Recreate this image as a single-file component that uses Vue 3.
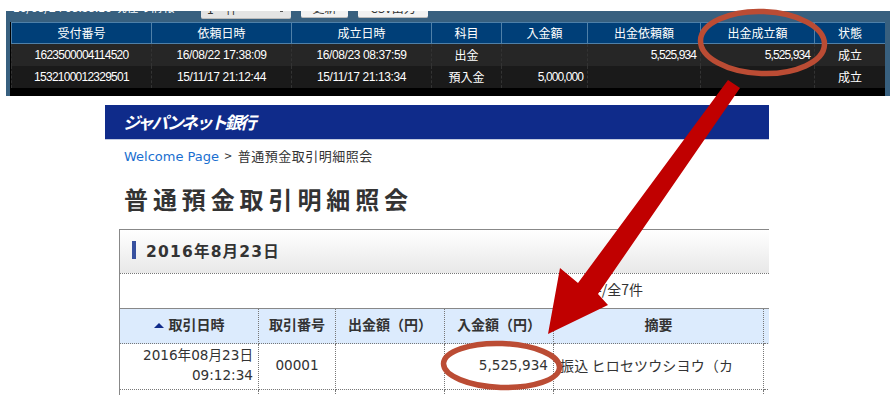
<script setup>
const topHead = ['受付番号', '依頼日時', '成立日時', '科目', '入金額', '出金依頼額', '出金成立額', '状態']
const topRows = [
  ['1623500004114520', '16/08/22 17:38:09', '16/08/23 08:37:59', '出金', '', '5,525,934', '5,525,934', '成立'],
  ['1532100012329501', '15/11/17 21:12:44', '15/11/17 21:13:34', '預入金', '5,000,000', '', '', '成立']
]
const numeric = [4, 5, 6]
const bankHead = ['取引日時', '取引番号', '出金額（円）', '入金額（円）', '摘要', '']
</script>

<template>
  <div class="page">
    <section class="panel">
      <div class="toolbar">
        <span class="stamp">16/08/24 08:38:16 現在の情報</span>
        <span class="select"><span>1</span><span>件</span><i class="caret"></i></span>
        <span class="btn update">更新</span>
        <span class="btn csv">CSV出力</span>
      </div>
      <div class="tradeTable">
        <div class="tradeRow headRow">
          <div v-for="h in topHead" :key="h" class="hcell">{{ h }}</div>
        </div>
        <div v-for="(row, r) in topRows" :key="r" class="tradeRow" :class="r ? 'rowB' : 'rowA'">
          <div
            v-for="(c, i) in row"
            :key="i"
            class="dcell"
            :class="{ num: numeric.includes(i), jp: i === 3 || i === 7, id: i === 0 }"
          >{{ c }}</div>
        </div>
      </div>
    </section>

    <section class="bank">
      <header class="banner"><span class="logo">ジャパンネット銀行</span></header>
      <nav class="crumb"><a class="link">Welcome Page</a> <span class="sep">&gt;</span> 普通預金取引明細照会</nav>
      <h1 class="title">普通預金取引明細照会</h1>
      <div class="card">
        <div class="dateHead"><span class="mark"></span><h2>2016年8月23日</h2></div>
        <div class="count">1～7件/全7件</div>
        <div class="grid thead">
          <div v-for="(h, i) in bankHead" :key="i" class="th">
            <span v-if="i === 0" class="sort"></span>{{ h }}
          </div>
        </div>
        <div class="grid tbody">
          <div class="td right">2016年08月23日<br>09:12:34</div>
          <div class="td center">00001</div>
          <div class="td"></div>
          <div class="td right">5,525,934</div>
          <div class="td memo">振込 ヒロセツウシヨウ（カ</div>
          <div class="td last"></div>
        </div>
        <div class="grid tail">
          <div class="td right">2016年</div>
          <div class="td"></div>
          <div class="td"></div>
          <div class="td"></div>
          <div class="td"></div>
          <div class="td last"></div>
        </div>
      </div>
    </section>

    <svg class="marks" width="896" height="403" viewBox="0 0 896 403">
      <ellipse cx="762.5" cy="42.5" rx="62" ry="31" transform="rotate(2 762.5 42.5)" fill="none" stroke="#bb4c34" stroke-width="5.5" />
      <ellipse cx="501.5" cy="365.5" rx="58" ry="22" transform="rotate(2 501.5 365.5)" fill="none" stroke="#bb4c34" stroke-width="5.5" />
      <polygon points="728,80 740,88 598,294 608,305 548,334 560,268 578,283" fill="#c00000" />
    </svg>
  </div>
</template>

<style>
html, body { margin: 0; background: #fff; }
</style>

<style scoped>
.page {
  position: relative;
  width: 896px;
  height: 403px;
  overflow: hidden;
  padding-top: 11px;
  box-sizing: border-box;
  background: #fff;
  font-family: "Noto Sans CJK JP", sans-serif;
}

/* top panel */
.panel {
  width: 884px;
  height: 85px;
  margin-left: 6px;
  padding-left: 4px;
  box-sizing: border-box;
  background: #38607f;
  overflow: hidden;
}
.toolbar {
  height: 11px;
  display: flex;
  align-items: flex-end;
  overflow: hidden;
  color: #fff;
  font-size: 12px;
}
.stamp {
  width: 188px;
  flex: none;
  margin-left: 3px;
  margin-bottom: 8px;
  line-height: 14px;
  white-space: nowrap;
}
.select, .btn {
  flex: none;
  height: 24px;
  box-sizing: border-box;
  display: flex;
  align-items: flex-end;
  justify-content: center;
  padding-bottom: 2px;
  line-height: 14px;
  color: #333;
  border-radius: 2px;
  border-bottom: 1px solid #bbb;
}
.select {
  width: 90px;
  margin-bottom: 3px;
  background: #e4e4e4;
  justify-content: flex-start;
  gap: 12px;
  padding-left: 6px;
  position: relative;
}
.caret {
  position: absolute;
  right: 8px;
  bottom: 6px;
  width: 3px;
  height: 2px;
  background: #555;
}
.btn { margin-bottom: 4px; background: #f2f2f2; }
.update { width: 47px; margin-left: 10px; }
.csv { width: 70px; margin-left: 10px; }

.tradeTable {
  width: 875px;
  height: 74px;
  background: #000;
  padding-left: 1px;
  box-sizing: border-box;
  color: #fff;
}
.tradeRow {
  display: grid;
  grid-template-columns: 140px 140px 140px 70px 86px 113px 114px 71px;
  width: 874px;
}
.headRow { height: 22px; }
.rowA { height: 22px; background: #262626; }
.rowB { height: 22px; background: #1a1a1a; }
.hcell {
  background: #003f78;
  border-left: 1px solid #4f80a8;
  border-top: 1px solid #4f80a8;
  border-bottom: 1px solid #4f80a8;
  box-sizing: border-box;
  font-size: 12px;
  line-height: 20px;
  text-align: center;
}
.dcell {
  border-left: 1px dashed #333;
  box-sizing: border-box;
  font-family: "Liberation Sans", sans-serif;
  font-size: 12px;
  line-height: 22px;
  letter-spacing: -0.4px;
  text-align: center;
  white-space: nowrap;
}
.dcell.id { letter-spacing: -0.75px; }
.dcell.jp { font-family: "Noto Sans CJK JP", sans-serif; font-size: 12px; letter-spacing: 0; }
.dcell.num { text-align: right; padding-right: 4px; letter-spacing: -0.9px; }

/* bank page */
.bank {
  width: 664px;
  margin: 9px 0 0 105px;
  color: #333;
}
.banner {
  height: 35px;
  box-sizing: border-box;
  background: #0f2b8a;
  border-bottom: 1px solid #c3cbe0;
  padding-left: 18px;
  line-height: 33px;
}
.logo {
  color: #fff;
  font-size: 17px;
  font-weight: 700;
  font-style: italic;
  letter-spacing: -2.4px;
  white-space: nowrap;
}
.crumb {
  height: 34px;
  margin-left: 19px;
  line-height: 32px;
  font-size: 13px;
  letter-spacing: 0.5px;
}
.link { color: #1a6fd0; font-family: "DejaVu Sans", "Noto Sans CJK JP", sans-serif; font-size: 13px; letter-spacing: 0; }
.sep { margin: 0 2px; }
.title {
  margin: 0 0 3px 19px;
  height: 52px;
  line-height: 50px;
  font-size: 24px;
  font-weight: 700;
  letter-spacing: 4.9px;
  white-space: nowrap;
}
.card {
  margin-left: 14px;
  width: 650px;
  height: 166px;
  box-sizing: border-box;
  border-left: 1px solid #888;
  border-top: 1px solid #888;
  overflow: hidden;
}
.dateHead {
  height: 44px;
  box-sizing: border-box;
  border-bottom: 1px dotted #777;
  background: linear-gradient(#fff, #e8e8e8);
  display: flex;
  align-items: center;
  padding: 0 0 3px 12px;
  gap: 10px;
}
.mark { width: 4px; height: 18px; background: #37509f; flex: none; }
.dateHead h2 {
  margin: 0;
  font-family: "DejaVu Sans", "Noto Sans CJK JP", sans-serif;
  font-size: 15.5px;
  font-weight: 700;
  letter-spacing: 1.2px;
}
.count {
  height: 35px;
  box-sizing: border-box;
  border-bottom: 1px solid #888;
  line-height: 30px;
  font-size: 14px;
  text-align: right;
  padding-right: 126px;
}
.grid {
  display: grid;
  grid-template-columns: 139px 77px 109px 109px 210px 6px;
}
.thead { height: 35px; background: #dcebfd; }
.th {
  box-sizing: border-box;
  border-right: 1px dotted #777;
  border-bottom: 1px dotted #777;
  line-height: 31px;
  font-size: 14px;
  font-weight: 700;
  text-align: center;
  white-space: nowrap;
}
.th:last-child { border-right: 0; }
.sort {
  display: inline-block;
  width: 0;
  height: 0;
  margin-right: 5px;
  vertical-align: 2px;
  border-left: 5px solid transparent;
  border-right: 5px solid transparent;
  border-bottom: 5px solid #0f2b8a;
}
.tbody { height: 46px; }
.tail { height: 10px; }
.td {
  box-sizing: border-box;
  border-right: 1px dotted #777;
  border-bottom: 1px dotted #777;
  font-family: "DejaVu Sans", "Noto Sans CJK JP", sans-serif;
  font-size: 13.6px;
  line-height: 20px;
  white-space: nowrap;
  overflow: hidden;
}
.td.last { border-right: 0; }
.right { text-align: right; padding: 1px 5px 0 0; }
.center { text-align: center; line-height: 42px; }
.tbody .td:nth-child(4) { line-height: 40px; }
.tail .right { padding-top: 5px; }
.memo {
  padding-left: 6px;
  line-height: 42px;
  font-family: "Noto Sans CJK JP", sans-serif;
  font-size: 14px;
  letter-spacing: 0.15px;
}

.marks { position: absolute; left: 0; top: 0; pointer-events: none; }
</style>
